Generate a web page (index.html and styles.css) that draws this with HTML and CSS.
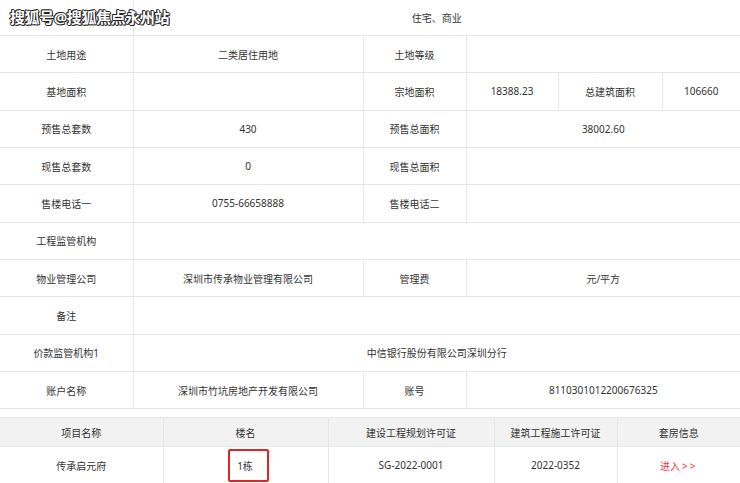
FILE: index.html
```html
<!DOCTYPE html>
<html lang="zh-CN">
<head>
  <meta charset="UTF-8">
  <title>传承启元府 - 楼盘信息</title>
  <link rel="stylesheet" href="styles.css">
</head>
<body>

  <div class="watermark">搜狐号@搜狐焦点永州站</div>

  <table class="info">
    <colgroup>
      <col class="c1"><col class="c2"><col class="c3"><col class="c4"><col class="c5"><col class="c6">
    </colgroup>
    <tr class="first">
      <td></td>
      <td colspan="5">住宅、商业</td>
    </tr>
    <tr>
      <td>土地用途</td>
      <td>二类居住用地</td>
      <td>土地等级</td>
      <td colspan="3"></td>
    </tr>
    <tr>
      <td>基地面积</td>
      <td></td>
      <td>宗地面积</td>
      <td>18388.23</td>
      <td>总建筑面积</td>
      <td>106660</td>
    </tr>
    <tr>
      <td>预售总套数</td>
      <td>430</td>
      <td>预售总面积</td>
      <td colspan="3">38002.60</td>
    </tr>
    <tr>
      <td>现售总套数</td>
      <td>0</td>
      <td>现售总面积</td>
      <td colspan="3"></td>
    </tr>
    <tr>
      <td>售楼电话一</td>
      <td>0755-66658888</td>
      <td>售楼电话二</td>
      <td colspan="3"></td>
    </tr>
    <tr>
      <td>工程监管机构</td>
      <td colspan="5"></td>
    </tr>
    <tr>
      <td>物业管理公司</td>
      <td>深圳市传承物业管理有限公司</td>
      <td>管理费</td>
      <td colspan="3">元/平方</td>
    </tr>
    <tr>
      <td>备注</td>
      <td colspan="5"></td>
    </tr>
    <tr>
      <td>价款监管机构1</td>
      <td colspan="5">中信银行股份有限公司深圳分行</td>
    </tr>
    <tr>
      <td>账户名称</td>
      <td>深圳市竹坑房地产开发有限公司</td>
      <td>账号</td>
      <td colspan="3">8110301012200676325</td>
    </tr>
  </table>

  <table class="houses">
    <colgroup>
      <col class="h1"><col class="h2"><col class="h3"><col class="h4"><col class="h5">
    </colgroup>
    <tr class="head">
      <th>项目名称</th>
      <th>楼名</th>
      <th>建设工程规划许可证</th>
      <th>建筑工程施工许可证</th>
      <th>套房信息</th>
    </tr>
    <tr>
      <td>传承启元府</td>
      <td><span class="marked">1栋</span></td>
      <td>SG-2022-0001</td>
      <td>2022-0352</td>
      <td><a href="#" class="enter">进入<span class="arrows">&gt;&gt;</span></a></td>
    </tr>
  </table>

</body>
</html>
```

FILE: styles.css
```css
body {
  margin:0;
  background:#fff;
  color:#333;
  font-family:"Noto Sans", "Noto Sans CJK SC", sans-serif;
  font-size:10px;
  position:relative;
}

.watermark {
  position:absolute;
  left:10px;
  top:6px;
  font-size:15px;
  font-weight:bold;
  color:#fff;
  letter-spacing:-0.4px;
  text-shadow:1px 0 0 #222, -1px 0 0 #222, 0 1px 0 #222, 0 -1px 0 #222, 1px 1px 0 #444, -1px -1px 0 #444;
}

table {
  width:740px;
  border-collapse:collapse;
  table-layout:fixed;
}

td, th {
  border:1px solid #e6e6e6;
  padding:0;
  text-align:center;
  font-weight:normal;
}

tr td:first-child, tr th:first-child {
  border-left:0;
}
tr td:last-child, tr th:last-child {
  border-right:0;
}

.info tr {
  height:37.33px;
}
.info tr.first {
  height:35.5px;
}
.info tr.first td {
  border-top:0;
}

.c1 { width:133px; }
.c2 { width:230px; }
.c3 { width:103px; }
.c4 { width:92px; }
.c5 { width:104px; }
.c6 { width:78px; }

.houses {
  margin-top:8px;
}
.houses tr.head {
  height:29px;
  background:#f2f2f2;
}
.houses tr {
  height:37px;
}

.h1 { width:163px; }
.h2 { width:165px; }
.h3 { width:166px; }
.h4 { width:123px; }
.h5 { width:123px; }

.marked {
  display:inline-block;
  border:2px solid #e02424;
  border-radius:2px;
  padding:7px 14px 7px 7px;
  margin-left:6px;
}

.enter {
  color:#f33;
  text-decoration:none;
}
.enter .arrows {
  letter-spacing:2px;
  margin-left:2px;
}
```
